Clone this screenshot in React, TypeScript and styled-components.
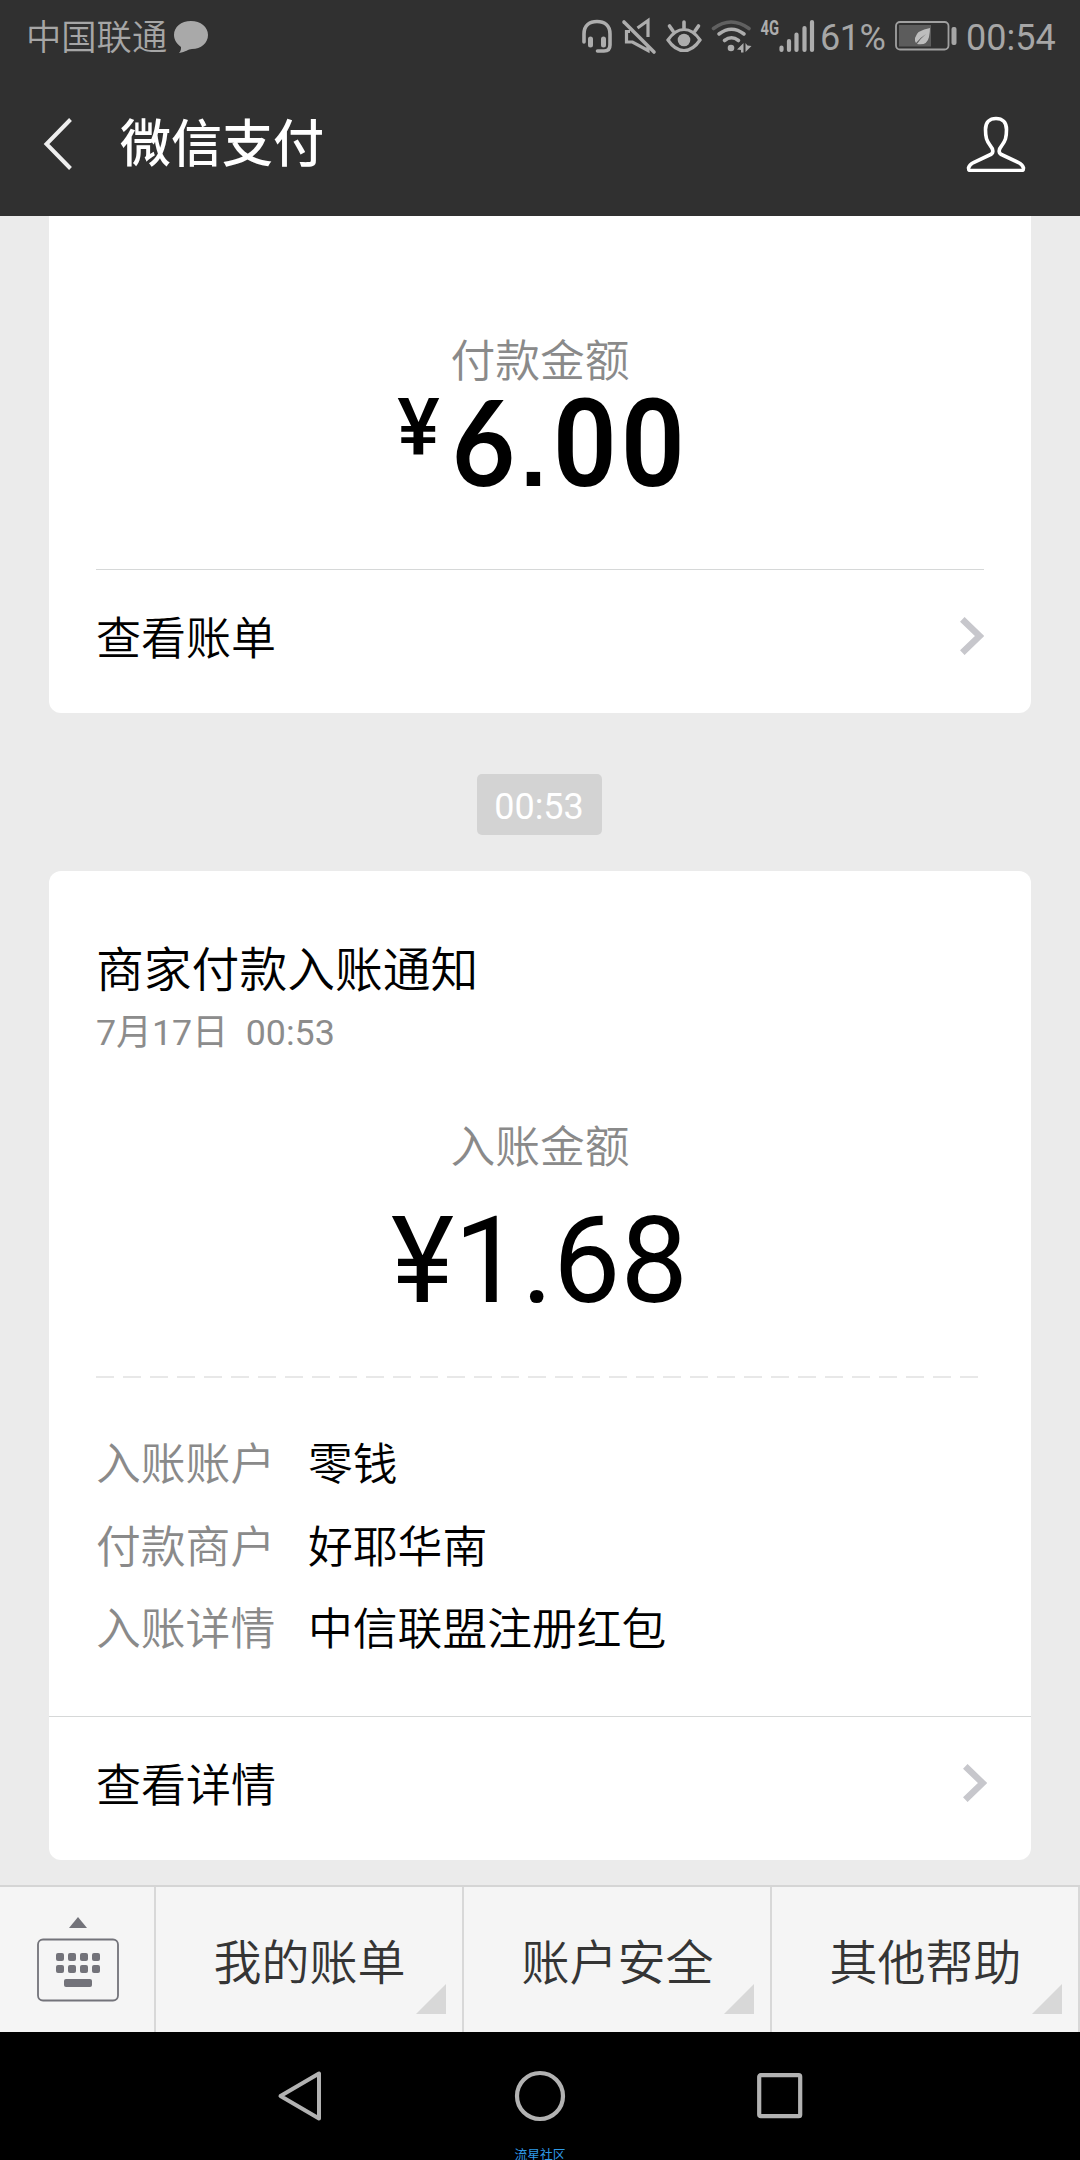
import React from "react";
import styled, { createGlobalStyle } from "styled-components";

const GlobalStyle = createGlobalStyle`
  * { box-sizing: border-box; }
  body {
    margin: 0;
    background: #ebebeb;
    font-family: Roboto, "Noto Sans CJK SC", sans-serif;
    font-weight: 400;
  }
  svg { display: block; flex: none; }
`;

const Screen = styled.div`
  width: 1080px;
  height: 2160px;
  display: flex;
  flex-direction: column;
  overflow: hidden;
  background: #ebebeb;
`;

const Header = styled.header`
  height: 216px;
  flex: none;
  background: #303030;
`;

const StatusBar = styled.div`
  height: 72px;
  padding: 0 23px 0 26px;
  display: flex;
  align-items: center;
  justify-content: space-between;
  color: #a6a6a6;
  font-size: 36px;
  line-height: 72px;
`;

const Carrier = styled.div`
  display: flex;
  align-items: center;
  gap: 6px;
  padding-top: 3px;
  font-size: 35.3px;
  font-weight: 350;
`;

const StatusIcons = styled.div`
  display: flex;
  align-items: center;
`;

const BatteryLevel = styled.span`
  width: 75px;
  padding-top: 3px;
  letter-spacing: -0.5px;
`;

const Clock = styled.span`
  width: 91px;
  padding-top: 3px;
  white-space: nowrap;
`;

const TitleBar = styled.div`
  height: 144px;
  padding: 0 54px 0 43px;
  display: flex;
  align-items: center;
`;

const Title = styled.h1`
  flex: 1;
  margin: 2px 0 0 47px;
  font-size: 51px;
  line-height: 72px;
  font-weight: 500;
  color: #fff;
`;

const Feed = styled.main`
  height: 1669px;
  flex: none;
  padding: 0 49px;
  display: flex;
  flex-direction: column;
  align-items: stretch;
`;

const Card = styled.section<{ $continued?: boolean }>`
  height: ${(p) => (p.$continued ? 497 : 989)}px;
  flex: none;
  display: flex;
  flex-direction: column;
  background: #fff;
  border-radius: ${(p) => (p.$continued ? "0 0 12px 12px" : "12px")};
`;

const AmountLabel = styled.div<{ $top: number }>`
  margin-top: ${(p) => p.$top}px;
  height: 60px;
  line-height: 60px;
  text-align: center;
  font-size: 44.8px;
  font-weight: 350;
  color: #8a8a8a;
`;

const BoldAmount = styled.div`
  height: 120px;
  margin-top: -11px;
  padding-right: 6px;
  display: flex;
  justify-content: center;
  align-items: baseline;
  color: #000;
  line-height: 120px;
`;

const BoldYen = styled.span`
  width: 60px;
  align-self: flex-start;
  padding-top: 8px;
  text-align: center;
  font-size: 80px;
  line-height: 78px;
  font-weight: 500;
`;

const Digit = styled.span<{ $width: number; $font?: string; $size?: number; $weight?: number; $squeeze?: number }>`
  width: ${(p) => p.$width}px;
  text-align: center;
  font-family: ${(p) => p.$font || "Roboto"}, sans-serif;
  font-size: ${(p) => p.$size || 122}px;
  font-weight: ${(p) => p.$weight || 600};
  transform: scaleX(${(p) => p.$squeeze || 1});
`;

const Amount = styled.div`
  margin-top: 13px;
  padding-right: 1px;
  height: 140px;
  line-height: 140px;
  text-align: center;
  font-size: 120px;
  color: #000;
`;

const LinkRow = styled.a<{ $full?: boolean }>`
  height: 144px;
  margin: ${(p) => (p.$full ? "auto 0 0" : "auto 47px 0")};
  padding: ${(p) => (p.$full ? "0 44px 0 47px" : "0")};
  border-top: 1px solid #d6d8d8;
  display: flex;
  align-items: center;
  justify-content: space-between;
  font-size: 45px;
  line-height: 60px;
  font-weight: 350;
  color: #000;

  svg { margin-bottom: 12px; }
  span { margin-bottom: 4px; }
`;

const TimeSlot = styled.div`
  height: 158px;
  flex: none;
  display: flex;
  align-items: center;
  justify-content: center;
  padding: 24px 2px 0 0;
`;

const TimePill = styled.time`
  width: 125px;
  height: 61px;
  border-radius: 5px;
  background: #d3d3d3;
  color: #fff;
  font-size: 36px;
  line-height: 66px;
  text-align: center;
`;

const NoticeTitle = styled.h2`
  margin: 70px 0 0 47px;
  height: 60px;
  font-size: 47.8px;
  line-height: 60px;
  font-weight: 350;
  color: #000;
`;

const NoticeDate = styled.div`
  margin: 8px 0 0 47px;
  height: 48px;
  font-size: 35.8px;
  line-height: 48px;
  color: #8c8c8c;
  white-space: pre;
`;

const DashedRule = styled.div`
  flex: none;
  width: 883px;
  height: 2px;
  margin: 45px 0 0 47px;
  background: repeating-linear-gradient(to right, #e8e8e8 0 18px, transparent 18px 27px);
`;

const Details = styled.dl`
  margin: 46px 0 0 47px;
  display: grid;
  grid-template-columns: 212px 1fr;
  grid-auto-rows: 82.5px;
  align-items: center;
  font-size: 44.8px;
  line-height: 60px;
  font-weight: 350;
`;

const Term = styled.dt`
  color: #8a8a8a;
`;

const Value = styled.dd`
  margin: 0;
  color: #000;
`;

const Menu = styled.nav`
  height: 147px;
  flex: none;
  display: grid;
  grid-template-columns: 156px repeat(3, 308px);
  border-top: 2px solid #d5d5d5;
  background: #f5f5f5;
`;

const KeyboardButton = styled.div`
  border-right: 2px solid #d8d8d8;
  padding: 30px 0 0 36px;
`;

const MenuItem = styled.div`
  position: relative;
  border-right: 2px solid #d8d8d8;
  text-align: center;
  padding: 47px 0 0 1px;
  font-size: 48px;
  line-height: 60px;
  font-weight: 350;
  color: #353535;
`;

const Corner = styled.i`
  position: absolute;
  right: 16px;
  bottom: 18px;
  width: 30px;
  height: 30px;
  background: #d8d8d8;
  clip-path: polygon(100% 0, 100% 100%, 0 100%);
`;

const SystemNav = styled.footer`
  height: 128px;
  flex: none;
  background: #000;
  display: flex;
  flex-direction: column;
  align-items: center;
  overflow: hidden;
`;

const NavKeys = styled.div`
  height: 114px;
  flex: none;
  width: 526px;
  padding-top: 14px;
  display: flex;
  align-items: center;
  justify-content: space-between;
`;

const Watermark = styled.div`
  height: 14px;
  flex: none;
  font-size: 12.8px;
  line-height: 17px;
  color: #2f9ae6;
`;

const Chevron = () => (
  <svg width="24" height="38" viewBox="0 0 24 38">
    <path d="M2.3 2.3 19.5 19 2.3 35.7" fill="none" stroke="#c7c7cc" strokeWidth="6.5" />
  </svg>
);

const Bubble = () => (
  <svg width="36" height="34" viewBox="0 0 36 34">
    <path d="M18 0c9.600 0 17 6 17 14s-7 14-16 14c-4 0-6 3-13 4 2-2 2-4 2-6-4-3-7-7-7-12C1 6 8 0 18 0Z" fill="#a9a9a9" />
  </svg>
);

const StatusGlyphs = () => (
  <svg width="240" height="40" viewBox="0 0 240 40" fill="none" stroke="#adadad" strokeWidth="3.6">
    {/* headset */}
    <path d="M4 26V18C4 9 10 5.500 17 5.500S30 9 30 18v11q0 6-6 6h-6.500" strokeLinecap="round" />
    <path d="M10.500 23v6M23.500 23v6" strokeWidth="5" strokeLinecap="round" />
    {/* muted speaker */}
    <path d="m44 6 30 30" strokeLinecap="round" />
    <path d="M57.500 12 68 4.500V21M50 15.500h-3.500v10.500h6L68 34.500V31" strokeWidth="3.2" />
    {/* eye comfort */}
    <path d="M88 24q7-10.500 16-10.500T120 24q-7 10.500-16 10.500T88 24Z" strokeWidth="3.2" />
    <circle cx="104" cy="24" r="6.300" fill="#adadad" stroke="none" />
    <path d="M104 6v6M89.500 10l3.500 5M118.500 10l-3.500 5" strokeLinecap="round" />
    {/* wifi */}
    <path d="M133.500 12.500q17.500-13 35.500 0" stroke="#606060" strokeLinecap="round" />
    <path d="M139 18q12.500-9.500 25 0M144.500 24.500q7-5.500 14 0" strokeLinecap="round" />
    <circle cx="151" cy="32" r="3.300" fill="#adadad" stroke="none" />
    <path d="M163.500 27v9.500h-2.500V34l-4-.500ZM165.500 36V27l2 2.500 4 .500Z" fill="#adadad" stroke="none" />
    {/* network */}
    <text
      x="180.500"
      y="18.500"
      fill="#adadad"
      stroke="none"
      fontFamily="Roboto, sans-serif"
      fontSize="20.500"
      fontWeight="700"
      textLength="18.500"
      lengthAdjust="spacingAndGlyphs"
    >
      4G
    </text>
    <path d="M201.500 31.500V34M209 25v9M216.500 18.500V34M224.500 12v22M232 6v28" strokeWidth="4.200" strokeLinecap="round" />
  </svg>
);

const Battery = () => (
  <svg width="71" height="32" viewBox="0 0 71 32">
    <rect x="1" y="2" width="52.500" height="27.500" rx="4" fill="none" stroke="#a0a0a0" strokeWidth="1.800" />
    <rect x="4" y="5" width="32" height="21.500" fill="#5c5c5c" />
    <rect x="56.500" y="7" width="5" height="18" rx="2" fill="#a6a6a6" />
    <path d="M35 8q-13 2-15 10-.500 3 1 5 5-6 10-9-6 5-9 10 10 2 12-7 1-5 1-9Z" fill="#bdbdbd" />
  </svg>
);

const rows = [
  ["入账账户", "零钱"],
  ["付款商户", "好耶华南"],
  ["入账详情", "中信联盟注册红包"],
];

const menuItems = ["我的账单", "账户安全", "其他帮助"];

export default function App() {
  return (
    <>
      <GlobalStyle />
      <Screen>
        <Header>
          <StatusBar>
            <Carrier>
              中国联通
              <Bubble />
            </Carrier>
            <StatusIcons>
              <StatusGlyphs />
              <BatteryLevel>61%</BatteryLevel>
              <Battery />
              <Clock>00:54</Clock>
            </StatusIcons>
          </StatusBar>
          <TitleBar>
            <svg width="30" height="54" viewBox="0 0 30 54">
              <path d="M27.500 2.500 3.500 27l24 24.500" fill="none" stroke="#eee" strokeWidth="4" />
            </svg>
            <Title>微信支付</Title>
            <svg width="60" height="56" viewBox="0 0 60 56">
              <path
                d="M30 2.500c-6.500 0-10.500 4-10.500 11 0 8 1 11 5 16.500 3.500 4 3 7.500-1 9L7.500 46.500q-4 2-5 5.500 0 2.500 2 2.500h51q2 0 2-2.500Q56.500 48.500 52.500 46.500l-16-7.500c-4-1.500-4.500-5-1-9 4-5.500 5-8.500 5-16.500 0-7-4-11-10.500-11Z"
                fill="none"
                stroke="#fff"
                strokeWidth="3.600"
              />
            </svg>
          </TitleBar>
        </Header>

        <Feed>
          <Card $continued>
            <AmountLabel $top={116}>付款金额</AmountLabel>
            <BoldAmount>
              <BoldYen>¥</BoldYen>
              <Digit $width={69} $font="Lato" $size={118} $weight={700} $squeeze={0.92}>6</Digit>
              <Digit $width={32} $font="'Liberation Sans'" $size={95} $weight={700}>.</Digit>
              <Digit $width={68} $squeeze={0.92}>0</Digit>
              <Digit $width={68} $squeeze={0.92}>0</Digit>
            </BoldAmount>
            <LinkRow>
              <span>查看账单</span>
              <Chevron />
            </LinkRow>
          </Card>

          <TimeSlot>
            <TimePill>00:53</TimePill>
          </TimeSlot>

          <Card>
            <NoticeTitle>商家付款入账通知</NoticeTitle>
            <NoticeDate>7月17日  00:53</NoticeDate>
            <AmountLabel $top={61}>入账金额</AmountLabel>
            <Amount>¥1.68</Amount>
            <DashedRule />
            <Details>
              {rows.map(([term, value]) => (
                <React.Fragment key={term}>
                  <Term>{term}</Term>
                  <Value>{value}</Value>
                </React.Fragment>
              ))}
            </Details>
            <LinkRow $full>
              <span>查看详情</span>
              <Chevron />
            </LinkRow>
          </Card>
        </Feed>

        <Menu>
          <KeyboardButton>
            <svg width="84" height="86" viewBox="0 0 84 86" fill="#73737a">
              <path d="m42 0 9 11H33Z" />
              <rect x="2" y="22.500" width="80" height="61" rx="5" fill="none" stroke="#73737a" strokeWidth="1.800" />
              {[20, 32, 44, 56].map((x) => (
                <React.Fragment key={x}>
                  <rect x={x} y="36" width="8" height="8" rx="2" />
                  <rect x={x} y="48" width="8" height="8" rx="2" />
                </React.Fragment>
              ))}
              <rect x="28" y="62" width="28" height="8" rx="2" />
            </svg>
          </KeyboardButton>
          {menuItems.map((item) => (
            <MenuItem key={item}>
              {item}
              <Corner />
            </MenuItem>
          ))}
        </Menu>

        <SystemNav>
          <NavKeys>
            <svg width="46" height="52" viewBox="0 0 46 52">
              <path d="M42 3.500v45L3.500 26Z" fill="none" stroke="#b2b2b2" strokeWidth="4" strokeLinejoin="round" />
            </svg>
            <svg width="52" height="52" viewBox="0 0 52 52">
              <circle cx="26" cy="26" r="23" fill="none" stroke="#b2b2b2" strokeWidth="4.200" />
            </svg>
            <svg width="46" height="46" viewBox="0 0 46 46">
              <rect x="2.200" y="2.200" width="41" height="41" rx="1.500" fill="none" stroke="#b2b2b2" strokeWidth="4.200" />
            </svg>
          </NavKeys>
          <Watermark>流星社区</Watermark>
        </SystemNav>
      </Screen>
    </>
  );
}
